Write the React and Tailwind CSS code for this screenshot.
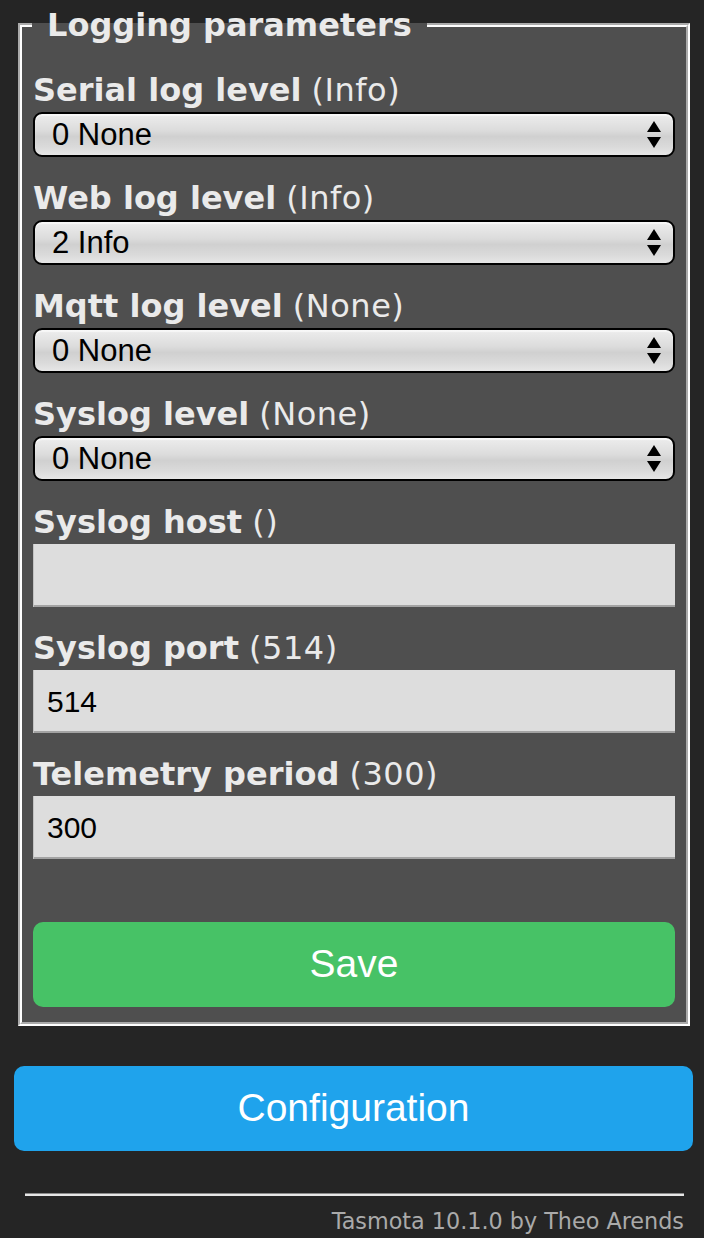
const labelFont = { fontFamily: '"DejaVu Sans", Verdana, sans-serif' };

const fields = [
  { label: 'Serial log level', def: 'Info', type: 'select', value: '0 None' },
  { label: 'Web log level', def: 'Info', type: 'select', value: '2 Info' },
  { label: 'Mqtt log level', def: 'None', type: 'select', value: '0 None' },
  { label: 'Syslog level', def: 'None', type: 'select', value: '0 None' },
  { label: 'Syslog host', def: '', type: 'input', value: '' },
  { label: 'Syslog port', def: '514', type: 'input', value: '514' },
  { label: 'Telemetry period', def: '300', type: 'input', value: '300' },
];

function Arrows() {
  return (
    <svg width="14" height="27" viewBox="0 0 14 27" className="shrink-0">
      <path d="M7 0 L14 11 L0 11 Z" fill="#000" />
      <path d="M0 16 L14 16 L7 27 Z" fill="#000" />
    </svg>
  );
}

function SelectBox({ value }) {
  return (
    <div className="flex h-[45px] items-center justify-between rounded-[9px] border-2 border-black bg-[linear-gradient(to_bottom,#ededed_0%,#dcdcdc_40%,#d0d0d0_55%,#dadada_80%,#e6e6e6_100%)] pl-[17px] pr-[12px] shadow-[inset_0_2px_1px_rgba(255,255,255,0.6)]">
      <span className="text-[31px] leading-none text-black" style={{ fontFamily: '"Liberation Sans", Arial, sans-serif' }}>
        {value}
      </span>
      <Arrows />
    </div>
  );
}

function InputBox({ value }) {
  return (
    <div className="flex h-[63px] items-center bg-[#dddddd] pl-[14px] shadow-[inset_1px_0_0_#c2c2c2,inset_0_-2px_0_#a3a3a3]">
      <span className="text-[30px] leading-none text-black" style={{ fontFamily: '"Liberation Sans", Arial, sans-serif' }}>
        {value}
      </span>
    </div>
  );
}

export default function App() {
  return (
    <div className="min-h-screen bg-[#252525] pt-[9px] text-[#eaeaea]" style={labelFont}>
      <fieldset className="ml-[18px] mr-[14px] border-4 border-white bg-[#4f4f4f] px-[11px] pb-[15px] [border-style:groove]">
        <legend className="ml-[-1px] px-[15px] text-[32px] font-bold leading-[32px]">Logging parameters</legend>

        <div className="mt-[33px] flex flex-col">
          {fields.map((f, i) => (
            <div key={f.label} className={i === 0 ? '' : 'mt-[25px]'}>
              <div className="mb-[6px] whitespace-nowrap text-[32px] leading-[32px]">
                <span className="font-bold">{f.label}</span>{' '}
                <span className="tracking-[0.5px]">({f.def})</span>
              </div>
              {f.type === 'select' ? <SelectBox value={f.value} /> : <InputBox value={f.value} />}
            </div>
          ))}
        </div>

        <button
          className="mt-[63px] flex h-[85px] w-full items-center justify-center rounded-[10px] bg-[#47c266] text-[39px] text-white"
          style={{ fontFamily: '"Liberation Sans", Arial, sans-serif' }}
        >
          Save
        </button>
      </fieldset>

      <button
        className="ml-[14px] mt-[40px] flex h-[85px] w-[679px] items-center justify-center rounded-[10px] bg-[#1fa3ec] text-[39px] text-white"
        style={{ fontFamily: '"Liberation Sans", Arial, sans-serif' }}
      >
        Configuration
      </button>

      <div className="ml-[25px] mr-[20px] mt-[42px]">
        <div className="h-px bg-[#8a8a8a]" />
        <div className="h-[2px] bg-[#e6e6e6]" />
      </div>

      <div className="mr-[20px] mt-[10px] text-right text-[22.3px] leading-[30px] text-[#aaaaaa]">
        Tasmota 10.1.0 by Theo Arends
      </div>
    </div>
  );
}
